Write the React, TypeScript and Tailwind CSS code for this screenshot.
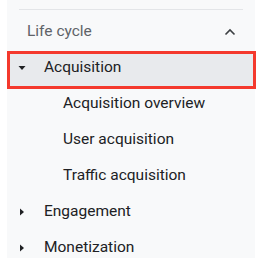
import React from "react";

const font = { fontFamily: "Roboto, 'Noto Sans', sans-serif" };

function TriRight() {
  return (
    <svg width="10" height="10" viewBox="0 0 10 10" className="shrink-0">
      <path d="M3 1.5 L7 5 L3 8.5 Z" fill="#202124" />
    </svg>
  );
}

function TriDown() {
  return (
    <svg width="10" height="10" viewBox="0 0 10 10" className="shrink-0">
      <path d="M1.5 3 L8.5 3 L5 7 Z" fill="#202124" />
    </svg>
  );
}

export default function App() {
  const subs = ["Acquisition overview", "User acquisition", "Traffic acquisition"];
  return (
    <div className="w-[262px] h-[258px] bg-white pl-[7px] overflow-hidden" style={font}>
      <div className="w-[248px] min-h-[258px] bg-[#f8f9fa] pt-[9px] flex flex-col">
        <div className="mx-[12px] h-px shrink-0 bg-[#e3e5e8]" />
        <div className="mt-[4px] h-[36px] shrink-0 flex items-center justify-between pl-[20px] pr-[19px]">
          <span className="text-[15.5px] text-[#5f6368]">Life cycle</span>
          <svg width="12" height="8" viewBox="0 0 12 8">
            <path d="M1.5 6.5 L6 2 L10.5 6.5" stroke="#3c4043" strokeWidth="1.6" fill="none" />
          </svg>
        </div>
        <div className="relative h-[36px] shrink-0">
          <div className="absolute left-0 right-0 top-[1px] bottom-[-3px] bg-[#e8eaed] rounded-r-[10px]" />
          <div className="absolute left-0 right-[-1px] top-[1px] bottom-[-3px] border-[3px] border-[#f4392d]" />
          <div className="relative h-full flex items-center pl-[10px]">
            <TriDown />
            <span className="ml-[17px] text-[15.5px] text-[#202124]">Acquisition</span>
          </div>
        </div>
        {subs.map((s) => (
          <div key={s} className="h-[36px] shrink-0 flex items-center pl-[56px]">
            <span className="text-[15.5px] text-[#202124]">{s}</span>
          </div>
        ))}
        {["Engagement", "Monetization"].map((s) => (
          <div key={s} className="h-[36px] shrink-0 flex items-center pl-[10px]">
            <TriRight />
            <span className="ml-[17px] text-[15.5px] text-[#202124]">{s}</span>
          </div>
        ))}
      </div>
    </div>
  );
}
